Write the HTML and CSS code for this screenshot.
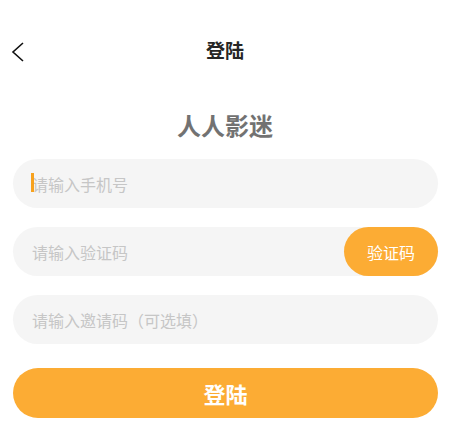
FILE: index.html
```html
<!DOCTYPE html>
<html lang="zh-CN">
<head>
<meta charset="utf-8">
<title>登陆</title>
<link rel="stylesheet" href="styles.css">
</head>
<body>
<div class="page">
  <header class="header">
    <span class="back">
      <svg width="16" height="22" viewBox="0 0 16 22"><path d="M13 2 L3 11 L13 20" fill="none" stroke="#111" stroke-width="1.6" stroke-linejoin="miter"/></svg>
    </span>
    <h1 class="title">登陆</h1>
  </header>
  <div class="brand">人人影迷</div>
  <form class="form">
    <div class="field"><span class="caret"></span><input class="input" type="text" placeholder="请输入手机号"></div>
    <div class="field"><input class="input" type="text" placeholder="请输入验证码"><button type="button" class="code-btn">验证码</button></div>
    <div class="field"><input class="input" type="text" placeholder="请输入邀请码（可选填）"></div>
    <button type="button" class="submit">登陆</button>
  </form>
</div>
</body>
</html>
```
FILE: styles.css
```css
* { box-sizing: border-box; }
html, body { margin: 0; padding: 0; background: #fff; }
body { font-family: "Noto Sans CJK SC", "Noto Sans", sans-serif; }
.page { width: 450px; }
.header {
  position: relative;
  height: 100px;
  display: flex;
  align-items: center;
  justify-content: center;
}
.back {
  position: absolute;
  left: 10px;
  top: 41px;
  width: 16px;
  height: 22px;
  display: flex;
}
.title {
  margin: 0;
  font-size: 19px;
  line-height: 20px;
  font-weight: 700;
  color: #262626;
}
.brand {
  margin-top: 12px;
  text-align: center;
  font-size: 24px;
  line-height: 26px;
  font-weight: 700;
  color: #727272;
}
.form {
  padding: 21px 12px 0 13px;
  display: flex;
  flex-direction: column;
}
.field {
  position: relative;
  height: 49px;
  border-radius: 25px;
  background: #f5f5f5;
  display: flex;
  align-items: center;
  margin-bottom: 19px;
}
.input {
  flex: 1;
  min-width: 0;
  height: 100%;
  border: 0;
  outline: none;
  background: transparent;
  padding: 0 0 0 19px;
  font-family: inherit;
  font-size: 16px;
  color: #333;
  caret-color: transparent;
}
.input::placeholder { color: #c6c6c6; }
.caret {
  position: absolute;
  left: 18px;
  top: 14px;
  width: 3px;
  height: 19px;
  background: #f7a21e;
}
.code-btn {
  flex: none;
  width: 94px;
  height: 49px;
  border: 0;
  border-radius: 25px;
  background: #fcac34;
  color: #fff;
  font-family: inherit;
  font-size: 16px;
  padding: 0;
}
.submit {
  margin-top: 5px;
  height: 50px;
  border: 0;
  border-radius: 25px;
  background: #fcac34;
  color: #fff;
  font-family: inherit;
  font-size: 22px;
  font-weight: 700;
  padding: 0;
}
```
